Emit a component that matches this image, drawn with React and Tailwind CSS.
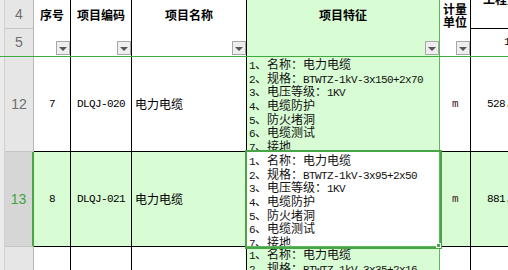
import React from 'react';

// WPS-style sheet: header rows 4/5 frozen, rows 12-14, active cell in 项目特征
const mono = "font-['Liberation_Mono',monospace] text-[11px] tracking-[-0.6px]";

const Mix = ({ text }) => {
    const parts = text.match(/[\x00-\x7f]+|[^\x00-\x7f]+/g) || [];
    return parts.map((p, i) =>
        /^[\x00-\x7f]/.test(p)
            ? <span key={i} className={mono}>{p}</span>
            : <span key={i}>{p}</span>
    );
};

const FilterBtn = () => (
    <div className="w-[14px] h-[14px] bg-[#eeeeee] border border-[#a8a8a8] flex items-center justify-center">
        <div className="w-0 h-0 mt-[2px] border-l-[4px] border-r-[4px] border-t-[4px] border-l-transparent border-r-transparent border-t-[#555555]" />
    </div>
);

const feats = (spec) => [
    '1、名称：电力电缆',
    `2、规格：BTWTZ-1kV-${spec}`,
    '3、电压等级：1KV',
    '4、电缆防护',
    '5、防火堵洞',
    '6、电缆测试',
    '7、接地',
];

const rows = [
    { num: '12', seq: '7', code: 'DLQJ-020', name: '电力电缆', spec: '3x150+2x70', unit: 'm', qty: '528.', h: 'h-[95px]', pt: 'pt-0' },
    { num: '13', seq: '8', code: 'DLQJ-021', name: '电力电缆', spec: '3x95+2x50', unit: 'm', qty: '881.', h: 'h-[95px]', pt: 'pt-px', active: true },
    { num: '', seq: '', code: '', name: '', spec: '3x35+2x16', unit: '', qty: '', h: 'flex-1', pt: 'pt-0', last: true },
];

const Row = ({ r }) => {
    const fill = r.active ? 'bg-[#d8fcd4]' : 'bg-white';
    const bb = r.last ? '' : 'border-b';
    return (
        <div className={`flex ${r.h} min-h-0`}>
            {/* row header */}
            <div className="w-[5px] bg-[#ebebeb] border-r border-[#d0d0d0]" />
            <div className={`w-[29px] flex items-center justify-center text-[14px] font-['Liberation_Sans',sans-serif] ${
                r.active ? 'bg-[#d6d6d6] text-[#3fa53f] border-r-2 border-r-[#45a845]' : 'bg-[#e6e6e6] text-[#6e6e6e] border-r border-r-[#b8b8b8]'
            } ${bb} border-b-[#c4c4c4]`}>
                {r.num}
            </div>

            <div className={`w-[37px] ${fill} border-r ${bb} border-black flex items-center justify-center ${mono}`}>
                {r.seq}
            </div>
            <div className={`w-[61px] ${fill} border-r ${bb} border-black flex items-center justify-center ${mono}`}>
                {r.code}
            </div>
            <div className={`w-[115px] ${fill} border-r ${bb} border-black flex items-center pl-[3px] text-[12px]`}>
                {r.name}
            </div>

            {/* 项目特征 */}
            <div className={`relative w-[193px] border-r ${bb} border-[#5cb85c] ${
                r.active ? 'z-10 bg-white outline-2 outline-[#47a447] outline-offset-0' : 'bg-[#d8fcd4]'
            }`}>
                <div className={`h-full overflow-hidden pl-[2px] ${r.pt} text-[12px] text-[#111]`}>
                    {feats(r.spec).map((t) => (
                        <div key={t} className="h-[13.7px] whitespace-nowrap leading-[13px]">
                            <Mix text={t} />
                        </div>
                    ))}
                </div>
                {r.active && (
                    <div className="absolute right-[-2px] bottom-[-2px] w-[5px] h-[5px] bg-[#47a447] border border-white" />
                )}
            </div>

            <div className={`w-[31px] ${fill} border-r ${bb} border-black flex items-center justify-center ${mono} text-[#3a2020]`}>
                {r.unit}
            </div>
            <div className={`flex-1 ${fill} ${bb} border-black flex items-center pl-[16px] ${mono} overflow-hidden whitespace-nowrap`}>
                {r.qty}
            </div>
        </div>
    );
};

const HeadCell = ({ w, children, bg = 'bg-white', border = 'border-black' }) => (
    <div className={`${w} ${bg} border-r ${border} flex flex-col`}>
        <div className="h-[30px] flex flex-col items-center justify-center font-bold text-[12px] leading-[13.5px]">
            {children}
        </div>
        <div className="flex-1 flex justify-end items-end pb-px">
            <FilterBtn />
        </div>
    </div>
);

export default function App() {
    return (
        <div className="w-[508px] h-[270px] overflow-hidden bg-white flex flex-col text-black font-['Noto_Sans_CJK_SC',sans-serif]">
            {/* Header rows 4-5 */}
            <div className="flex h-[56px]">
                <div className="w-[5px] bg-[#ebebeb] border-r border-[#d0d0d0]" />
                <div className="w-[29px] bg-[#e6e6e6] border-r border-[#b8b8b8] flex flex-col text-[14px] text-[#6e6e6e] font-['Liberation_Sans',sans-serif]">
                    <div className="h-[29px] border-b border-[#c4c4c4] flex items-center justify-center">4</div>
                    <div className="flex-1 flex items-center justify-center">5</div>
                </div>
                <HeadCell w="w-[37px]">序号</HeadCell>
                <HeadCell w="w-[61px]">项目编码</HeadCell>
                <HeadCell w="w-[115px]">项目名称</HeadCell>
                <HeadCell w="w-[193px]" bg="bg-[#d8fcd4]" border="border-[#5cb85c]">项目特征</HeadCell>
                <HeadCell w="w-[31px]">
                    <span>计量</span>
                    <span>单位</span>
                </HeadCell>
                <div className="flex-1 flex flex-col overflow-hidden">
                    <div className="h-[29px] border-b border-black pl-[12px] font-bold text-[12px] leading-[12px] whitespace-nowrap">
                        <div className="-mt-[7px]">工程量</div>
                    </div>
                    <div className={`flex-1 flex items-center pl-[33px] ${mono}`}>1</div>
                </div>
            </div>

            {/* freeze line */}
            <div className="h-px bg-[#3faa3f]" />

            {rows.map((r, i) => (
                <Row key={i} r={r} />
            ))}
        </div>
    );
}
